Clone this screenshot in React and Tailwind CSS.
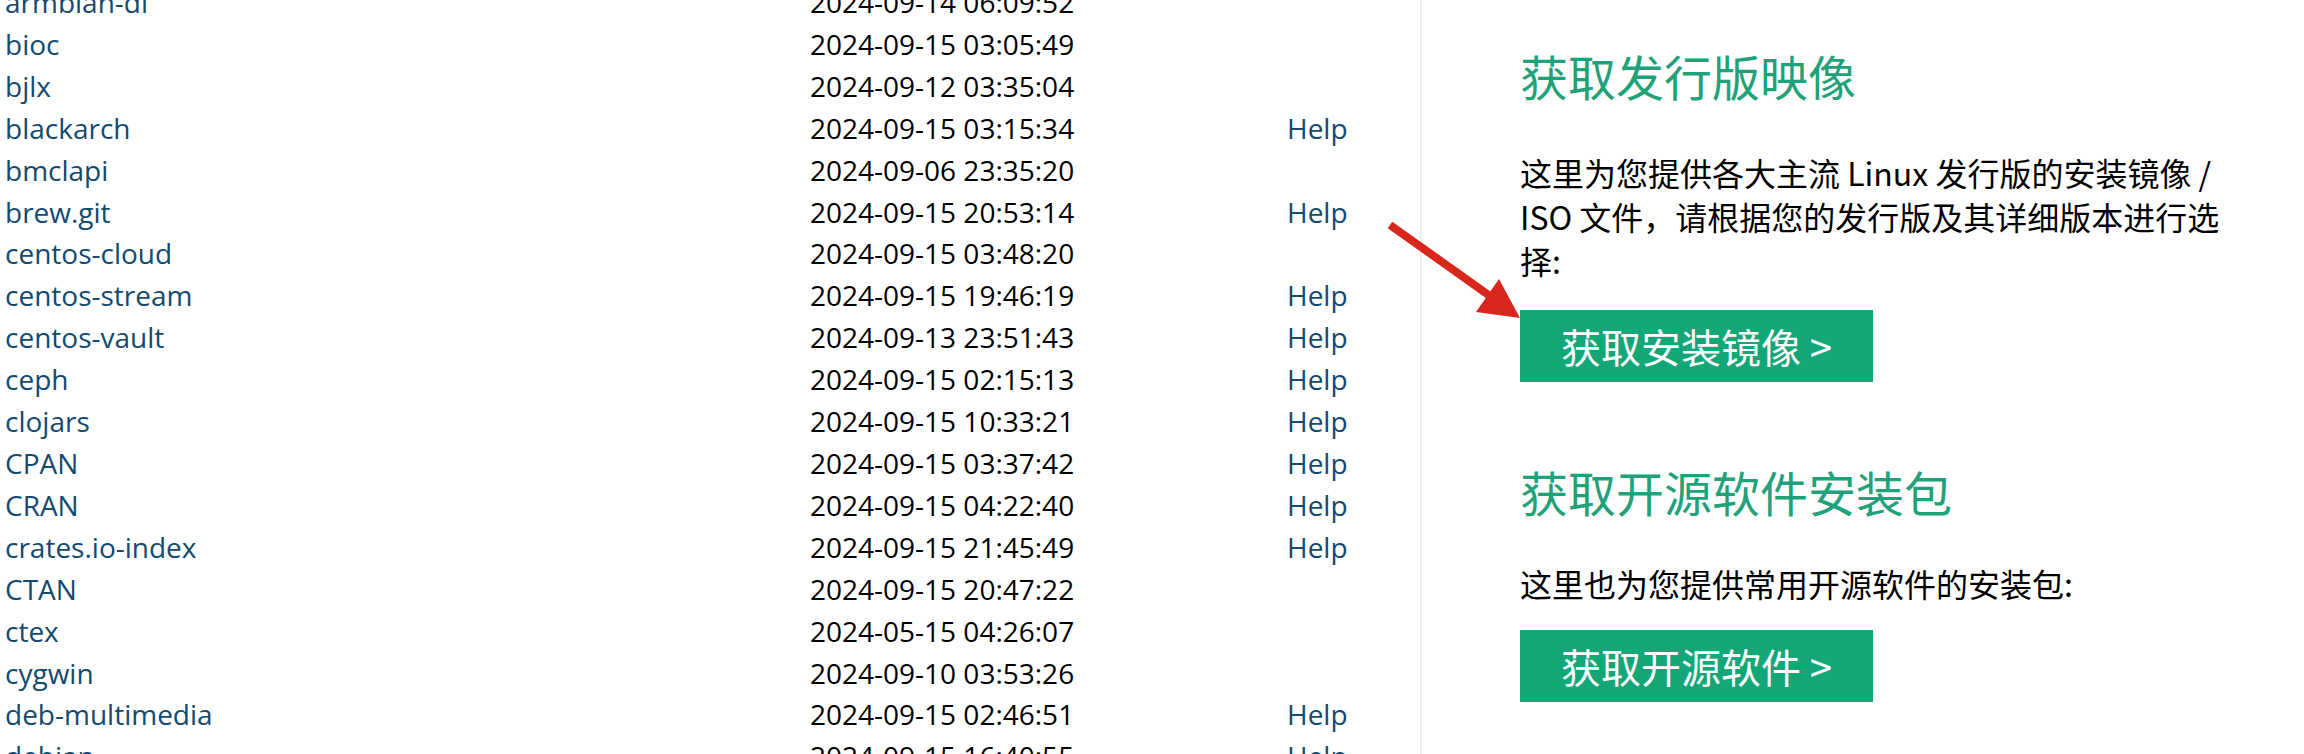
const ROWS = [
  ["armbian-dl", "2024-09-14 06:09:52", false],
  ["bioc", "2024-09-15 03:05:49", false],
  ["bjlx", "2024-09-12 03:35:04", false],
  ["blackarch", "2024-09-15 03:15:34", true],
  ["bmclapi", "2024-09-06 23:35:20", false],
  ["brew.git", "2024-09-15 20:53:14", true],
  ["centos-cloud", "2024-09-15 03:48:20", false],
  ["centos-stream", "2024-09-15 19:46:19", true],
  ["centos-vault", "2024-09-13 23:51:43", true],
  ["ceph", "2024-09-15 02:15:13", true],
  ["clojars", "2024-09-15 10:33:21", true],
  ["CPAN", "2024-09-15 03:37:42", true],
  ["CRAN", "2024-09-15 04:22:40", true],
  ["crates.io-index", "2024-09-15 21:45:49", true],
  ["CTAN", "2024-09-15 20:47:22", false],
  ["ctex", "2024-05-15 04:26:07", false],
  ["cygwin", "2024-09-10 03:53:26", false],
  ["deb-multimedia", "2024-09-15 02:46:51", true],
  ["debian", "2024-09-15 16:40:55", true],
];

function MirrorTable() {
  return (
    <div className="w-[1422px] shrink-0 border-r-2 border-[#eeeeee] font-['Open_Sans',sans-serif] text-[28px] leading-[41.9px]">
      <div className="-mt-[18px]">
        {ROWS.map(([name, date, help]) => (
          <div key={name} className="grid grid-cols-[805px_477px_1fr] pl-[5px]">
            <a href="#" className="text-[#134a6e]">
              {name}
            </a>
            <span className="text-black">{date}</span>
            <span>
              {help && (
                <a href="#" className="text-[#134a6e]">
                  Help
                </a>
              )}
            </span>
          </div>
        ))}
      </div>
    </div>
  );
}

export default function App() {
  return (
    <div className="relative flex h-[754px] w-full overflow-hidden bg-white">
      <MirrorTable />

      <div className="flex-1 pl-[98px] font-['Noto_Sans_CJK_SC',sans-serif]">
        <div className="w-[712px]">
          <h2 className="mt-[49px] text-[48px] leading-[53px] text-[#1fa27a]">
            获取发行版映像
          </h2>
          <p className="mt-[48px] text-[32px] leading-[44px] text-black">
            这里为您提供各大主流 Linux 发行版的安装镜像 / ISO
            文件，请根据您的发行版及其详细版本进行选择:
          </p>
          <a
            href="#"
            className="mt-[28px] flex h-[72px] w-[353px] items-center justify-center bg-[#13a676] text-[40px] text-white"
          >
            获取安装镜像 &gt;
          </a>

          <h2 className="mt-[83px] text-[48px] leading-[53px] text-[#1fa27a]">
            获取开源软件安装包
          </h2>
          <p className="mt-[43px] text-[32px] leading-[44px] text-black">
            这里也为您提供常用开源软件的安装包:
          </p>
          <a
            href="#"
            className="mt-[25px] flex h-[72px] w-[353px] items-center justify-center bg-[#13a676] text-[40px] text-white"
          >
            获取开源软件 &gt;
          </a>
        </div>
      </div>

      {/* red annotation arrow */}
      <svg
        className="pointer-events-none absolute left-0 top-0"
        width="2304"
        height="754"
        viewBox="0 0 2304 754"
      >
        <line x1="1390" y1="225" x2="1490" y2="296" stroke="#d9261c" strokeWidth="8" />
        <polygon points="1520,318 1476,312 1499,279" fill="#d9261c" />
      </svg>
    </div>
  );
}
